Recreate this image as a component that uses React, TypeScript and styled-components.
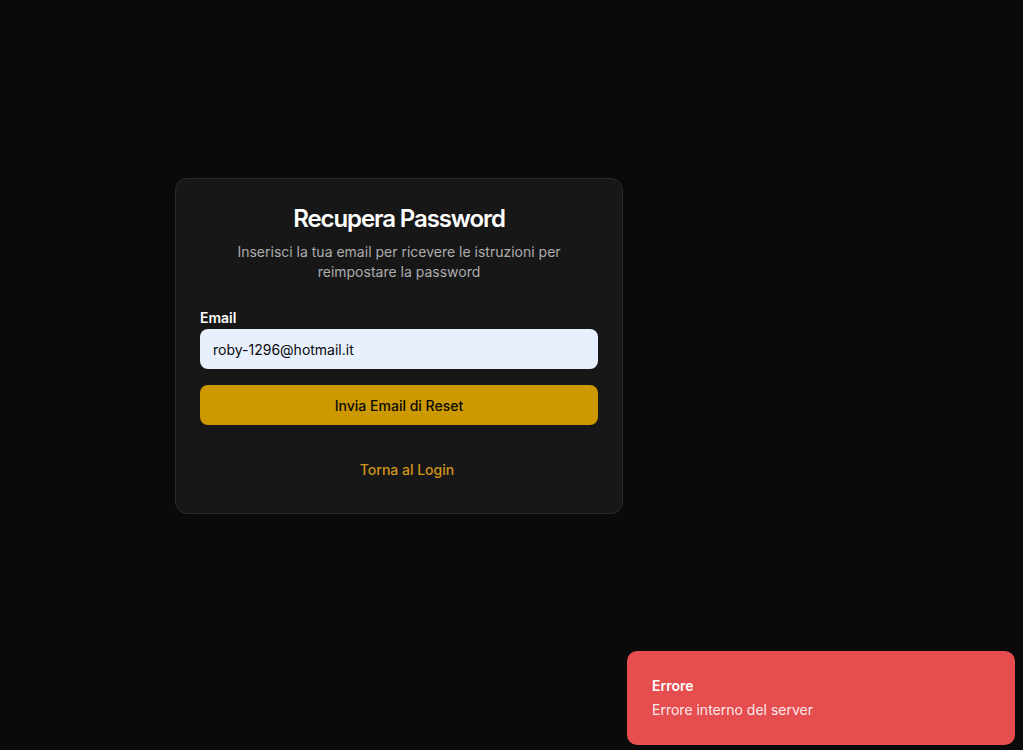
import React from "react";
import styled, { createGlobalStyle } from "styled-components";

const Global = createGlobalStyle`
  * { box-sizing: border-box; }
  html, body { margin: 0; padding: 0; background: #0a0a0a; }
  body { font-family: Inter, "Noto Sans", sans-serif; color: #fafafa; }
`;

const Page = styled.main`
  min-height: 750px;
  background: #0a0a0a;
  display: flex;
  align-items: flex-start;
  padding: 178px 0 0 175px;
`;

const Card = styled.section`
  width: 448px;
  background: #171717;
  border: 1px solid #2a2a2a;
  border-radius: 12px;
  padding: 24px 24px 22px;
  display: flex;
  flex-direction: column;
`;

const Header = styled.header`
  display: flex;
  flex-direction: column;
  align-items: center;
  text-align: center;
  gap: 7px;
  padding: 0 8px;
`;

const Title = styled.h1`
  margin: 0;
  font-size: 24px;
  line-height: 32px;
  font-weight: 600;
  letter-spacing: -1.1px;
  color: #ffffff;
`;

const Subtitle = styled.p`
  margin: 0;
  font-size: 14px;
  line-height: 20px;
  color: #adadad;
`;

const Form = styled.form`
  display: flex;
  flex-direction: column;
  margin-top: 29px;
  gap: 16px;
`;

const Field = styled.div`
  display: flex;
  flex-direction: column;
  gap: 4px;
`;

const Label = styled.label`
  font-size: 14px;
  line-height: 14px;
  font-weight: 600;
  color: #ffffff;
`;

const Input = styled.input`
  height: 40px;
  width: 100%;
  border: 1px solid transparent;
  border-radius: 8px;
  background: #e8f0fe;
  color: #0a0a0a;
  padding: 0 12px;
  font-family: Inter, "Noto Sans", sans-serif;
  font-size: 14px;
  outline: none;
`;

const Button = styled.button`
  height: 40px;
  width: 100%;
  border: none;
  border-radius: 8px;
  background: #cc9900;
  color: #0a0a0a;
  font-family: Inter, "Noto Sans", sans-serif;
  font-size: 14px;
  font-weight: 500;
  cursor: pointer;
`;

const Footer = styled.div`
  display: flex;
  justify-content: center;
  margin-top: 35px;
  padding: 0 0 11px 16px;
`;

const LinkText = styled.a`
  font-size: 14px;
  line-height: 20px;
  font-weight: 500;
  color: #d1951a;
  text-decoration: none;
`;

const Toast = styled.div`
  position: fixed;
  right: 8px;
  bottom: 5px;
  width: 388px;
  height: 94px;
  background: #e54d4f;
  border-radius: 10px;
  padding: 0 24px 0 25px;
  display: flex;
  flex-direction: column;
  justify-content: center;
  gap: 4px;
`;

const ToastTitle = styled.div`
  font-size: 14px;
  line-height: 20px;
  font-weight: 600;
  color: #ffffff;
`;

const ToastMessage = styled.div`
  font-size: 14px;
  line-height: 20px;
  color: rgba(255, 255, 255, 0.9);
`;

export default function App() {
  return (
    <>
      <Global />
      <Page>
        <Card>
          <Header>
            <Title>Recupera Password</Title>
            <Subtitle>
              Inserisci la tua email per ricevere le istruzioni per reimpostare la password
            </Subtitle>
          </Header>
          <Form onSubmit={(e) => e.preventDefault()}>
            <Field>
              <Label htmlFor="email">Email</Label>
              <Input id="email" type="email" defaultValue="roby-1296@hotmail.it" />
            </Field>
            <Button type="submit">Invia Email di Reset</Button>
          </Form>
          <Footer>
            <LinkText href="#">Torna al Login</LinkText>
          </Footer>
        </Card>
      </Page>
      <Toast>
        <ToastTitle>Errore</ToastTitle>
        <ToastMessage>Errore interno del server</ToastMessage>
      </Toast>
    </>
  );
}
